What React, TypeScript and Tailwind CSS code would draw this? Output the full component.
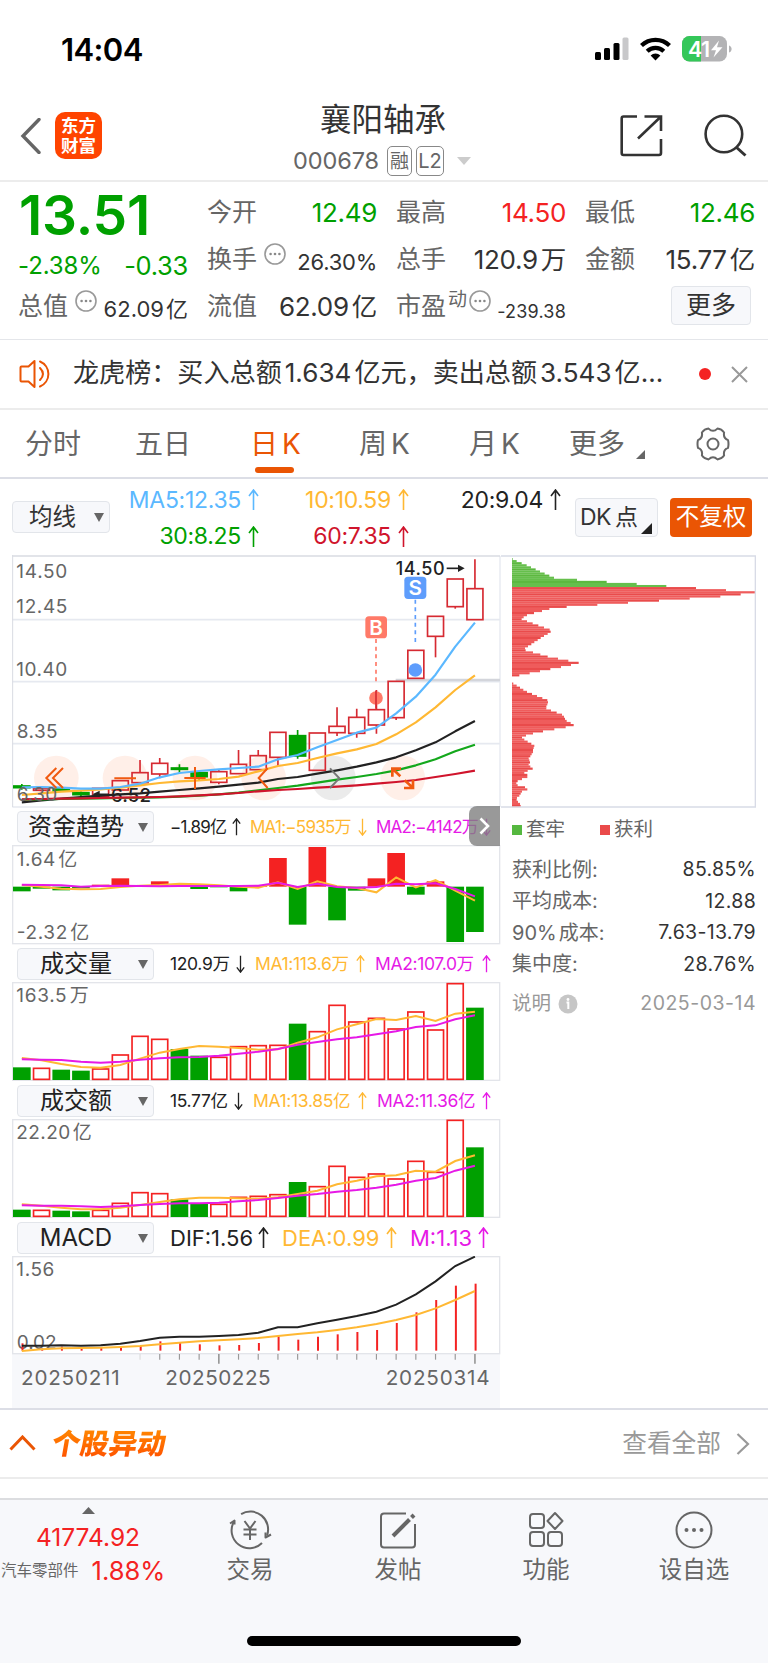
import React from "react";

const PITCH = 59.1;
const cx = (i: number) => 65.5 + PITCH * i;
const line = (ys: number[]) => ys.map((y, i) => `${cx(i)},${y}`).join(" ");

const GREEN = "#00a000";
const RED = "#f42222";
const ORANGE = "#ffb833";
const PINK = "#e619e6";
const CANDLE = "#d62a32";
const UI = '"Inter","Noto Sans CJK SC",sans-serif';

type Candle = { up: boolean; top: number; bottom: number; high: number; low: number };
const c = (up: boolean, top: number, bottom: number, high = top, low = bottom): Candle => ({ up, top, bottom, high, low });

const candles: Candle[] = [
  c(false, 708, 713, 702, 719), c(true, 715, 721, 715, 724), c(false, 714, 723), c(false, 728, 734, 724, 742),
  c(true, 715, 740), c(true, 692, 720), c(true, 668, 698, 630, 698), c(true, 640, 672, 624, 685),
  c(false, 654, 658, 643, 668), c(false, 668, 680, 665, 690), c(true, 665, 697, 660, 703), c(true, 643, 671, 600, 671),
  c(true, 617, 659, 600, 659), c(true, 547, 622, 547, 648), c(false, 557, 618, 540, 626), c(true, 549, 661),
  c(true, 529, 548, 472, 558), c(true, 502, 550, 476, 563), c(true, 479, 525, 420, 551), c(true, 394, 503, 394, 510),
  c(true, 301, 385), c(true, 199, 259, 199, 322), c(true, 87, 170, 87, 176), c(true, 116, 209, 28, 209),
];

const ma5 = [712, 711, 713, 716, 716, 711, 701, 682, 669, 663, 658, 654, 650, 628, 615, 592, 570, 548, 533, 490, 440, 374, 290, 218];
const ma10 = [735, 730, 725, 722, 718, 713, 706, 699, 694, 691, 687, 680, 664, 648, 639, 624, 610, 598, 582, 553, 517, 472, 420, 376];
const ma20 = [757, 751, 746, 741, 737, 733, 730, 725, 720, 715, 710, 704, 698, 687, 681, 671, 661, 650, 637, 622, 601, 577, 544, 513];
const ma30 = [749, 748, 747, 746, 745, 744, 743, 742, 740, 737, 733, 728, 721, 714, 707, 698, 689, 681, 672, 661, 646, 628, 604, 584];
const ma60 = [748, 747, 746, 745, 744, 743, 742, 741, 739, 736, 733, 729, 724, 720, 717, 713, 710, 706, 701, 696, 690, 681, 672, 662];

const chips = [
  38, 50, 65, 80, 93, 107, 120, 134, 148, 162, 231, 320, 410, 499, 588, 678, 765, 722, 661, 569, 477, 384, 292, 200, 148, 126, 102, 81, 71, 65,
  81, 98, 115, 132, 149, 152, 143, 132, 122, 113, 103, 94, 84, 75, 77, 99, 121, 143, 174, 205, 236, 213, 183, 151, 120, 89, 58, 36, 36, 36, 40,
  50, 60, 70, 81, 96, 111, 127, 142, 144, 142, 139, 139, 153, 170, 186, 192, 195, 200, 212, 221, 197, 163, 129, 99, 78, 66, 73, 83, 94, 103,
  101, 99, 99, 95, 91, 86, 88, 90, 86, 91, 98, 83, 73, 82, 82, 66, 53, 49, 53, 75, 82, 66, 62, 58, 51, 50, 54, 60, 62,
];

const flow = [259, 251, 256, 250, 239, 220, 243, 229, 242, 252, 247, 259, 243, 159, 359, 126, 346, 257, 220, 144, 269, 229, 411, 381];
const flowMa1 = [240, 245, 251, 253, 252, 246, 242, 240, 236, 238, 241, 245, 248, 232, 252, 229, 244, 249, 262, 217, 247, 225, 257, 287];
const flowMa2 = [239, 240, 241, 245, 243, 242, 243, 244, 243, 243, 243, 243, 242, 233, 246, 236, 246, 248, 246, 236, 238, 235, 252, 274];

const falling = new Set([0, 2, 3, 8, 9, 14, 23]);
const vol = [367, 370, 374, 377, 372, 330, 274, 283, 312, 332, 337, 305, 302, 301, 236, 260, 181, 231, 220, 252, 201, 255, 116, 188];
const volMa1 = [339, 346, 357, 366, 368, 360, 341, 323, 312, 303, 305, 309, 314, 313, 293, 277, 253, 238, 222, 225, 213, 228, 206, 200];
const volMa2 = [343, 344, 345, 350, 353, 350, 344, 340, 337, 336, 332, 326, 320, 312, 299, 291, 283, 277, 268, 259, 246, 241, 223, 211];

const amt = [374, 376, 377, 379, 376, 355, 323, 326, 343, 356, 358, 337, 334, 329, 291, 305, 244, 277, 267, 282, 229, 262, 106, 187];
const amtMa1 = [358, 362, 368, 373, 373, 368, 360, 351, 343, 338, 338, 340, 341, 337, 327, 317, 298, 287, 274, 271, 257, 260, 228, 211];
const amtMa2 = [361, 362, 362, 364, 366, 364, 360, 357, 355, 355, 353, 349, 345, 339, 332, 327, 320, 315, 308, 299, 287, 279, 257, 242];

const macd = [370, 385, 380, 384, 384, 382, 378, 364, 366, 373, 376, 375, 369, 349, 359, 350, 343, 336, 330, 309, 277, 240, 197, 191];
const dif = [377, 377, 376, 377, 376, 371, 363, 353, 350, 350, 348, 345, 338, 322, 322, 310, 299, 288, 275, 254, 223, 184, 138, 110];
const dea = [393, 388, 385, 384, 383, 381, 378, 373, 368, 364, 361, 358, 354, 348, 342, 337, 330, 322, 312, 300, 285, 265, 240, 213];

function Label({ x, y, w, size = 57, fill = "#666", children }: { x: number; y: number; w: number; size?: number; fill?: string; children: string }) {
  return (
    <text x={x} y={y} textLength={w} lengthAdjust="spacing" fontSize={size} fill={fill} fontFamily={UI}>
      {children}
    </text>
  );
}

function Dots() {
  return (
    <svg className="h-[22px] w-[22px] shrink-0" viewBox="0 0 22 22" fill="none">
      <circle cx="11" cy="11" r="10" stroke="#999" strokeWidth="1.6" />
      <circle cx="6.6" cy="11" r="1.3" fill="#888" />
      <circle cx="11" cy="11" r="1.3" fill="#888" />
      <circle cx="15.4" cy="11" r="1.3" fill="#888" />
    </svg>
  );
}

function Arrow({ down = false, h = 22 }: { down?: boolean; h?: number }) {
  return (
    <svg className="shrink-0" width={h / 2} height={h} viewBox="0 0 11 22" fill="none" stroke="currentColor" strokeWidth="1.6">
      <path d={down ? "M5.5 1V21M1 15L5.5 21L10 15" : "M5.5 21V1M1 7L5.5 1L10 7"} />
    </svg>
  );
}

function Caret() {
  return (
    <svg className="h-[9px] w-[10px] shrink-0" viewBox="0 0 10 9" fill="#666">
      <path d="M0 0H10L5 9Z" />
    </svg>
  );
}

function StatusBar() {
  return (
    <div className="flex h-[98px] items-center pl-[61px] pr-9">
      <span className="text-[31px] font-semibold leading-none tracking-[-0.6px] text-black">14:04</span>
      <svg className="ml-auto h-[26px] w-[138px]" viewBox="594 36 138 26">
        <rect x="595" y="52" width="6" height="8" rx="1.5" fill="#000" />
        <rect x="604" y="48" width="6" height="12" rx="1.5" fill="#000" />
        <rect x="613.5" y="43" width="6" height="17" rx="1.5" fill="#000" />
        <rect x="622.5" y="37.5" width="6" height="22.5" rx="1.5" fill="#c8c8ca" />
        <g fill="none" stroke="#000" strokeWidth="4.2">
          <path d="M641.5 45.5A20 20 0 0 1 669.5 45.5" />
          <path d="M647.2 51.3A12 12 0 0 1 663.8 51.3" />
        </g>
        <path d="M655.5 60.5L650.6 55.4A7 7 0 0 1 660.4 55.4Z" fill="#000" />
        <clipPath id="battery"><rect x="682" y="36" width="45" height="25.5" rx="7.5" /></clipPath>
        <g clipPath="url(#battery)">
          <rect x="682" y="36" width="45" height="26" fill="#b3b3b5" />
          <rect x="682" y="36" width="19" height="26" fill="#34c759" />
        </g>
        <path d="M729 45.5C732.5 46.5 732.5 51.5 729 52.5Z" fill="#b3b3b5" />
        <text x="688" y="56.5" fontSize="21.5" fontWeight="600" textLength="22" fill="#fff" fontFamily={UI}>41</text>
        <path d="M719 40.5L711 50.3H716L713.5 57.5L722.5 47.2H717Z" fill="#fff" />
      </svg>
    </div>
  );
}

function Header() {
  return (
    <header className="flex h-[84px] items-start border-b-2 border-[#ececec] pl-[20px]">
      <svg className="mt-[20px] h-[36px] w-[21px]" viewBox="0 0 21 36" fill="none" stroke="#666" strokeWidth="3.4">
        <path d="M19 1.5L3 18L19 34.5" strokeLinecap="round" />
      </svg>
      <div className="ml-[14px] mt-[14px] flex h-[47px] w-[47px] flex-col items-center justify-center rounded-[10px] bg-[#ff4400] text-[17.5px] font-bold leading-[19.5px] text-white">
        <span>东方</span>
        <span>财富</span>
      </div>
      <div className="ml-[171px] mt-[4px] flex w-[220px] flex-col items-center">
        <h1 className="whitespace-nowrap text-[31.5px] leading-[36px] text-[#333]">襄阳轴承</h1>
        <div className="mt-[8px] flex h-[30px] w-[180px] items-center text-[#666]">
          <span className="mr-[7px] w-[87px] shrink-0 whitespace-nowrap text-[23.5px] leading-none tracking-[-0.1px]">000678</span>
          <span className="mr-[4px] flex h-[30px] w-[25px] shrink-0 items-center justify-center rounded-[5px] border-[1.5px] border-[#888] text-[19px] leading-none">融</span>
          <span className="flex h-[30px] w-[28px] shrink-0 items-center justify-center rounded-[5px] border-[1.5px] border-[#888] text-[20px] leading-none">L2</span>
          <svg className="ml-[13px] h-[8px] w-[14px] shrink-0" viewBox="0 0 14 8" fill="#ccc"><path d="M0 0H14L7 8Z" /></svg>
        </div>
      </div>
      <svg className="ml-[125px] mt-[15px] h-[45px] w-[130px] shrink-0" viewBox="618 113 130 45" fill="none" stroke="#333" strokeWidth="2.6">
        <path d="M637 116.5H623.5Q621.7 116.5 621.7 118.5V153Q621.7 155 623.5 155H659Q661 155 661 153V139" />
        <path d="M644.5 116.5H661V131M661 116.5L638 138.5" />
        <circle cx="723.9" cy="134" r="18.3" />
        <path d="M736 147L745.500 155.5" strokeWidth="3" />
      </svg>
    </header>
  );
}

function Field({ label, value, unit, color = "text-[#333]" }: { label: string; value: string; unit?: string; color?: string }) {
  return (
    <div className="flex h-[47px] items-center whitespace-nowrap">
      <span className="ml-[-1px] text-[25px] leading-none text-[#666]">{label}</span>
      <span className={`${color} ml-auto text-[26px] leading-none tracking-[-0.3px]`}>
        {value}
        {unit && <span className="ml-[3px] text-[25.5px]">{unit}</span>}
      </span>
    </div>
  );
}

function Quote() {
  return (
    <section className="grid h-[158px] grid-cols-4 gap-x-5 border-b-[1.5px] border-[#e4e6ea] pl-[19px] pr-[13px] pt-[7px]">
      <div className="whitespace-nowrap text-[#00a000]">
        <div className="mt-[-1px] h-[54px] text-[55px] font-semibold leading-[54px] tracking-[-0.2px]">13.51</div>
        <div className="flex h-[41px] items-center justify-between pt-[7px] leading-none">
          <span className="ml-[-1px] text-[24px] tracking-[-0.1px]">-2.38%</span>
          <span className="text-[25.5px] tracking-[-0.3px]">-0.33</span>
        </div>
        <div className="flex h-[47px] items-center text-[#333]">
          <span className="ml-[-1px] text-[25px] leading-none text-[#666]">总值</span>
          <span className="mb-[11px] ml-[7px]"><Dots /></span>
          <span className="ml-auto pt-[5px] text-[22px] leading-none">62.09<span className="ml-[2px]">亿</span></span>
        </div>
      </div>
      <div>
        <Field label="今开" value="12.49" color="text-[#00a000]" />
        <div className="flex h-[47px] items-center whitespace-nowrap">
          <span className="ml-[-1px] text-[25px] leading-none text-[#666]">换手</span>
          <span className="mb-[11px] ml-[7px]"><Dots /></span>
          <span className="ml-auto pt-[5px] text-[22px] leading-none tracking-[-0.25px] text-[#333]">26.30%</span>
        </div>
        <Field label="流值" value="62.09" unit="亿" />
      </div>
      <div>
        <Field label="最高" value="14.50" color="text-[#f42222]" />
        <Field label="总手" value="120.9" unit="万" />
        <div className="flex h-[47px] items-center whitespace-nowrap">
          <span className="ml-[-1px] text-[25px] leading-none text-[#666]">市盈</span>
          <span className="mb-[15px] ml-[2px] text-[19px] leading-none text-[#666]">动</span>
          <span className="mb-[11px] ml-[2px]"><Dots /></span>
          <span className="ml-auto pt-[10px] text-[18px] leading-none tracking-[0.2px] text-[#333]">-239.38</span>
        </div>
      </div>
      <div>
        <Field label="最低" value="12.46" color="text-[#00a000]" />
        <Field label="金额" value="15.77" unit="亿" />
        <div className="flex h-[47px] items-center justify-end pb-[2px] pr-[4px]">
          <button className="h-[39px] w-[80px] rounded-[4px] border-[1.5px] border-[#e2e5ea] bg-[#f7f8fb] text-[25px] leading-none text-[#333]">更多</button>
        </div>
      </div>
    </section>
  );
}

function News() {
  return (
    <section className="flex h-[70px] items-center border-b-2 border-[#ececec] pl-[19px] pr-[20px]">
      <svg className="h-[30px] w-[34px]" viewBox="0 0 34 30" fill="none" stroke="#ea5504" strokeWidth="2">
        <path d="M2.5 7.5H9.5L15.5 2V28L9.5 22.5H2.5Q1.5 22.5 1.5 21.5V8.5Q1.5 7.5 2.5 7.5Z" strokeLinejoin="round" />
        <path d="M21 9Q27 15 21 21M21 2.5A13.5 13.5 0 0 1 21 27.5" strokeLinecap="round" />
      </svg>
      <p className="ml-[20px] w-[592px] whitespace-nowrap pb-[1px] text-[26.1px] leading-none text-[#333]">
        龙虎榜：买入总额<span className="mx-[3px]">1.634</span>亿元，卖出总额<span className="mx-[3px]">3.543</span>亿...
      </p>
      <span className="ml-auto h-[12px] w-[12px] rounded-full bg-[#f42222]" />
      <svg className="ml-[20px] h-[17px] w-[17px]" viewBox="0 0 17 17" stroke="#999" strokeWidth="2"><path d="M1 1L16 16M16 1L1 16" /></svg>
    </section>
  );
}

function Tabs() {
  return (
    <nav className="flex h-[69px] items-center border-b-2 border-[#dcdee6] pl-[25px] text-[28px] leading-none text-[#666]">
      <span className="w-[110px] whitespace-nowrap">分时</span>
      <span className="w-[115px] whitespace-nowrap">五日</span>
      <span className="relative w-[109px] whitespace-nowrap text-[#ea5504]">
        日<span className="ml-[4px]">K</span>
        <span className="absolute left-[5px] top-[37px] h-[6px] w-[39px] rounded-[3px] bg-[#ea5504]" />
      </span>
      <span className="w-[110px] whitespace-nowrap">周<span className="ml-[4px]">K</span></span>
      <span className="w-[100px] whitespace-nowrap">月<span className="ml-[4px]">K</span></span>
      <span className="w-[67px] whitespace-nowrap">更多</span>
      <svg className="mt-[22px] h-[9px] w-[9px]" viewBox="0 0 9 9" fill="#666"><path d="M9 0V9H0Z" /></svg>
      <svg className="ml-[51px] h-[34px] w-[34px]" viewBox="0 0 34 34" fill="none" stroke="#666" strokeWidth="2">
        <path
          strokeLinejoin="round"
          d="M32 13.1Q33 17 32 20.9Q27 22.8 28.1 28.5Q25.6 31.9 21.4 32.4Q17 28 12.6 32.4Q8.4 31.9 5.9 28.5Q7 22.8 2 20.9Q1 17 2 13.1Q7 11.2 5.9 5.5Q8.4 2.1 12.6 1.6Q17 6 21.4 1.6Q25.6 2.1 28.1 5.5Q27 11.2 32 13.1Z"
        />
        <circle cx="17" cy="17" r="5.5" />
      </svg>
    </nav>
  );
}

function Ma({ w, text, color }: { w: string; text: string; color: string }) {
  return (
    <span className={`flex items-center justify-end gap-[7px] whitespace-nowrap text-[23px] leading-none tracking-[-0.3px] ${w} ${color}`}>
      {text}
      <Arrow />
    </span>
  );
}

function Averages() {
  return (
    <section className="flex h-[76px] items-center pl-[12px]">
      <button className="flex h-[32px] w-[98px] items-center justify-between rounded-[4px] border-[1.5px] border-[#e2e5ea] bg-[#f7f8fb] pl-[16px] pr-[5px] text-[23.5px] leading-none text-[#333]">
        均线<Caret />
      </button>
      <div className="grid h-[76px] grid-cols-[149px_150px_152px] grid-rows-2 pt-[3px]">
        <Ma w="w-[149px]" text="MA5:12.35" color="text-[#5bb8ff]" />
        <Ma w="w-[150px]" text="10:10.59" color="text-[#ffb833]" />
        <Ma w="w-[152px]" text="20:9.04" color="text-[#222]" />
        <Ma w="w-[149px]" text="30:8.25" color="text-[#00a000]" />
        <Ma w="w-[150px]" text="60:7.35" color="text-[#d0142c]" />
      </div>
      <button className="ml-[14px] flex h-[39px] w-[83px] items-center rounded-[4px] border-[1.5px] border-[#e2e5ea] bg-[#f7f8fb] pl-[4px] text-[23px] leading-none text-[#333]">
        <span className="w-[61px] whitespace-nowrap text-left tracking-[-0.5px]">DK<span className="ml-[4px]">点</span></span>
        <svg className="mt-[22px] h-[11px] w-[11px] shrink-0" viewBox="0 0 11 11" fill="#222"><path d="M11 0V11H0Z" /></svg>
      </button>
      <button className="ml-[12px] h-[39px] w-[82px] rounded-[4px] bg-[#ea5504] text-[23.5px] leading-none text-white">不复权</button>
    </section>
  );
}

function CandleChart() {
  return (
    <svg className="block h-[253px] w-[489px]" viewBox="36 15 1467 759">
      <g stroke="#e6e9f0" strokeWidth="5">
        <path d="M37 209H1500M37 395H1500M37 581H1500" />
        <path d="M37 771H1500M1500 18V771" strokeWidth="4" />
        <path d="M38 15V771" strokeWidth="3" stroke="#d8dbe2" />
        <path d="M37 18H1500" stroke="#d8dbe2" />
      </g>
      <path d="M1187 390H1500" stroke="#d3d5db" strokeWidth="8" />
      <Label x={49} y={84} w={153}>14.50</Label>
      <Label x={49} y={190} w={153}>12.45</Label>
      <Label x={49} y={377} w={153}>10.40</Label>
      <Label x={50} y={564} w={123}>8.35</Label>
      {[169, 375, 585, 791, 1208].map((x) => (
        <circle key={x} cx={x} cy={684} r={67} fill="#ff6420" fillOpacity={0.1} />
      ))}
      <circle cx={1000} cy={684} r={67} fill="#888" fillOpacity={0.17} />
      {candles.map((k, i) => (
        <g key={i} stroke={k.up ? CANDLE : GREEN} strokeWidth="5">
          <path d={`M${cx(i)} ${k.high}V${k.top}M${cx(i)} ${k.bottom}V${k.low}`} />
          <rect x={cx(i) - 24} y={k.top} width="48" height={k.bottom - k.top} fill={k.up ? "none" : GREEN} />
        </g>
      ))}
      <g stroke="#222" strokeWidth="5" fill="none">
        <path d="M327 733H285" />
        <path d="M1340 55H1384" />
        <path d="M299 722L277 733L299 744Z" fill="#222" stroke="none" />
        <path d="M1374 44L1394 55L1374 66Z" fill="#222" stroke="none" />
      </g>
      <text x={333} y={756} textLength={120} fontSize={56} fill="#222" fontFamily={UI} fontWeight="500">6.52</text>
      <text x={1187} y={76} textLength={147} fontSize={54} fill="#222" fontFamily={UI} fontWeight="500">14.50</text>
      <circle cx={1128} cy={444} r={20.5} fill="#ff7a68" />
      <path d="M1128 422V476" stroke={CANDLE} strokeWidth="5" />
      <circle cx={1246} cy={360} r={20.5} fill="#5e9dfc" />
      <path d="M1128 267V395" stroke="#ff7a68" strokeWidth="5" strokeDasharray="12 11" />
      <path d="M1246 149V277" stroke="#5e9dfc" strokeWidth="5" strokeDasharray="12 11" />
      <rect x="1096" y="199" width="65" height="66" rx="11" fill="#ff7a68" />
      <rect x="1213" y="80" width="66" height="67" rx="11" fill="#5e9dfc" />
      <text x="1128.5" y="255" fontSize="62" fontWeight="600" textAnchor="middle" fill="#fff" fontFamily={UI}>B</text>
      <text x="1246" y="136" fontSize="62" fontWeight="600" textAnchor="middle" fill="#fff" fontFamily={UI}>S</text>
      <g fill="none" strokeWidth="6.5" strokeLinejoin="round">
        <polyline points={line(ma20)} stroke="#222" />
        <polyline points={line(ma30)} stroke="#14a81c" />
        <polyline points={line(ma60)} stroke="#d0142c" />
        <polyline points={line(ma10)} stroke={ORANGE} />
        <polyline points={line(ma5)} stroke="#5bb8ff" />
      </g>
      <Label x={50} y={752} w={122}>6.30</Label>
      <g fill="none" stroke="#f05a10" strokeWidth="6">
        <path d="M169 654L139 684L169 714M189 654L159 684L189 714" />
        <path d="M343 685H408M553 684H617M585 651V717" />
        <path d="M803 654L776 684L803 714" />
        <path d="M1177 680V656H1203M1179 658L1201 679M1239 690V714H1212M1237 712L1214 691" strokeWidth="8" />
        <path d="M990 655L1018 685L990 714" stroke="#777" />
      </g>
    </svg>
  );
}

function ChipChart() {
  const step = 6.225;
  return (
    <svg className="block h-[253px] w-[255px]" viewBox="3 15 765 759">
      {chips.map((x, i) => (
        <rect
          key={i}
          x={36}
          y={24 + i * step}
          width={Math.max(0, x - 36)}
          height={step + 0.4}
          fill={i < 14 ? (i % 3 === 2 ? "#5cb83f" : "#66bf4c") : i % 3 === 2 ? "#e94b4b" : "#ef5c5c"}
        />
      ))}
      <path d="M3 18H766V771H3" fill="none" stroke="#d8dbe6" strokeWidth="4" />
    </svg>
  );
}

type Stat = { text: string; color: string; down?: boolean; pos: string };

function PanelHead({ title, stats, size = "text-[17.5px] tracking-[-0.35px]", arrow = 18 }: { title: string; stats: Stat[]; size?: string; arrow?: number }) {
  return (
    <div className="flex h-[37px] items-center pl-[5px] pt-[1px]">
      <button className="mr-[16px] flex h-[32px] w-[137px] shrink-0 items-center rounded-[4px] border-[1.5px] border-[#e2e5ea] bg-[#f7f8fb] pr-[5px] text-[24px] leading-none text-[#222]">
        <span className="w-[111px] shrink-0 whitespace-nowrap pl-[5px] text-center">{title}</span>
        <span className="ml-auto"><Caret /></span>
      </button>
      {stats.map((s) => (
        <span key={s.text} className={`flex shrink-0 items-center justify-between whitespace-nowrap leading-none ${size} ${s.color} ${s.pos}`}>
          {s.text}
          <Arrow down={s.down} h={arrow} />
        </span>
      ))}
    </div>
  );
}

function Frame({ top, bottom }: { top: number; bottom: number }) {
  return <rect x="38" y={top} width="1461" height={bottom - top} fill="none" stroke="#e3e5ea" strokeWidth="4" />;
}

function FlowChart() {
  return (
    <svg className="block h-[100px] w-[489px]" viewBox="36 120 1467 300">
      <Frame top={122} bottom={416} />
      <Label x={50} y={182} w={182}>{"1.64\u200a亿"}</Label>
      <Label x={50} y={403} w={218}>{"-2.32\u200a亿"}</Label>
      {flow.map((y, i) => (
        <rect key={i} x={cx(i) - 26.5} width="53" y={Math.min(y, 245)} height={Math.abs(y - 245)} fill={y < 245 ? RED : GREEN} />
      ))}
      <g fill="none" strokeWidth="6">
        <polyline points={line(flowMa1)} stroke={ORANGE} />
        <polyline points={line(flowMa2)} stroke={PINK} />
      </g>
    </svg>
  );
}

function BarChart({ y0, bottom, label, labelWidth, tops, ma1, ma2 }: { y0: number; bottom: number; label: string; labelWidth: number; tops: number[]; ma1: number[]; ma2: number[] }) {
  return (
    <svg className="block h-[100px] w-[489px]" viewBox={`36 ${y0} 1467 300`}>
      <Frame top={y0 + 2} bottom={bottom + 1} />
      <Label x={49} y={y0 + 61} w={labelWidth}>{label}</Label>
      {tops.map((y, i) =>
        falling.has(i) ? (
          <rect key={i} x={cx(i) - 26.5} width="53" y={y} height={bottom - y} fill={GREEN} />
        ) : (
          <rect key={i} x={cx(i) - 24} width="48" y={y} height={bottom - 2 - y} fill="none" stroke={RED} strokeWidth="5" />
        )
      )}
      <g fill="none" strokeWidth="6">
        <polyline points={line(ma1)} stroke={ORANGE} />
        <polyline points={line(ma2)} stroke={PINK} />
      </g>
    </svg>
  );
}

function MacdChart() {
  return (
    <svg className="block h-[152px] w-[489px]" viewBox="36 108 1467 456">
      <rect x="36" y="402" width="1464" height="162" fill="#f7f8fb" />
      <Frame top={110} bottom={401} />
      <Label x={49} y={167} w={114}>1.56</Label>
      <Label x={50} y={387} w={120}>0.02</Label>
      {macd.map((y, i) => (
        <path key={i} d={`M${cx(i) + 2} ${y}V392`} stroke={RED} strokeWidth="6" />
      ))}
      <g fill="none" strokeWidth="6">
        <polyline points={line(dea)} stroke={ORANGE} />
        <polyline points={line(dif)} stroke="#222" />
      </g>
      {Array.from({ length: 18 }, (_, k) => k + 6).map((i) => {
        const major = i === 10 || i === 23;
        return <path key={i} d={`M${cx(i)} 402V${major ? 431 : 419}`} stroke={i === 6 ? "#ddd" : "#999"} strokeWidth={major ? 5 : 3.5} />;
      })}
      <Label x={63} y={494} w={296} size={62}>20250211</Label>
      <Label x={496} y={494} w={316} size={62}>20250225</Label>
      <Label x={1157} y={494} w={312} size={62}>20250314</Label>
    </svg>
  );
}

function ChipRow({ label, value }: { label: React.ReactNode; value: string }) {
  return (
    <div className="flex h-[31.5px] items-center justify-between whitespace-nowrap leading-none">
      <span className="text-[20px] text-[#666]">{label}</span>
      <span className="text-[19.5px] tracking-[0.3px] text-[#333]">{value}</span>
    </div>
  );
}

function Charts() {
  return (
    <section className="flex h-[855px] items-start border-b-2 border-[#dcdee6] pl-[12px]">
      <div className="relative w-[489px]">
        <CandleChart />
        <PanelHead
          title="资金趋势"
          size="text-[17px] tracking-[-0.75px]"
          stats={[
            { text: "−1.89亿", color: "text-[#222]", pos: "w-[71px]" },
            { text: "MA1:−5935万", color: "text-[#ffb833]", down: true, pos: "ml-[9px] w-[117px]" },
            { text: "MA2:−4142万", color: "text-[#e619e6]", down: true, pos: "ml-[9px] w-[115px]" },
          ]}
        />
        <div className="absolute right-[1px] top-[251px] flex h-[40px] w-[31px] items-center justify-center rounded-l-[8px] bg-[#808080]/80">
          <svg className="h-[18px] w-[11px]" viewBox="0 0 11 18" fill="none" stroke="#fff" strokeWidth="2.6"><path d="M1.5 1.5L9 9L1.5 16.5" /></svg>
        </div>
        <FlowChart />
        <PanelHead
          title="成交量"
          stats={[
            { text: "120.9万", color: "text-[#222]", down: true, pos: "w-[75px]" },
            { text: "MA1:113.6万", color: "text-[#ffb833]", pos: "ml-[10px] w-[110px]" },
            { text: "MA2:107.0万", color: "text-[#e619e6]", pos: "ml-[10px] w-[116px]" },
          ]}
        />
        <BarChart y0={111} bottom={405} label={"163.5\u200a万"} labelWidth={217} tops={vol} ma1={volMa1} ma2={volMa2} />
        <PanelHead
          title="成交额"
          stats={[
            { text: "15.77亿", color: "text-[#222]", down: true, pos: "w-[73px]" },
            { text: "MA1:13.85亿", color: "text-[#ffb833]", pos: "ml-[10px] w-[114px]" },
            { text: "MA2:11.36亿", color: "text-[#e619e6]", pos: "ml-[10px] w-[114px]" },
          ]}
        />
        <BarChart y0={102} bottom={396} label={"22.20\u200a亿"} labelWidth={226} tops={amt} ma1={amtMa1} ma2={amtMa2} />
        <PanelHead
          title="MACD"
          size="text-[22px]"
          arrow={22}
          stats={[
            { text: "DIF:1.56", color: "text-[#222]", pos: "w-[99px]" },
            { text: "DEA:0.99", color: "text-[#ffb833]", pos: "ml-[13px] w-[115px]" },
            { text: "M:1.13", color: "text-[#e619e6]", pos: "ml-[13px] w-[79px]" },
          ]}
        />
        <MacdChart />
      </div>
      <div className="w-[255px]">
        <ChipChart />
        <div className="pl-[11px]">
          <div className="mt-[8px] flex h-[27px] items-center text-[19.5px] leading-none text-[#666]">
            <span className="mr-[4px] h-[10px] w-[10px] bg-[#55b83f]" />
            <span className="w-[74px]">套牢</span>
            <span className="mr-[4px] h-[10px] w-[10px] bg-[#ea4a4a]" />
            <span>获利</span>
          </div>
          <div className="mt-[11px]">
            <ChipRow label="获利比例:" value="85.85%" />
            <ChipRow label="平均成本:" value="12.88" />
            <ChipRow label={<>90%<span className="ml-[2px]">成本:</span></>} value="7.63-13.79" />
            <ChipRow label="集中度:" value="28.76%" />
          </div>
          <div className="mt-[9px] flex h-[30px] items-center text-[19.5px] leading-none text-[#999]">
            <span>说明</span>
            <svg className="ml-[7px] h-[20px] w-[20px]" viewBox="0 0 20 20">
              <circle cx="10" cy="10" r="9.5" fill="#c6c6c6" />
              <circle cx="10" cy="5.5" r="1.4" fill="#fff" />
              <path d="M8.5 8.5H10.3V15" stroke="#fff" strokeWidth="2" fill="none" />
            </svg>
            <span className="ml-auto tracking-[0.5px]">2025-03-14</span>
          </div>
        </div>
      </div>
    </section>
  );
}

function Movement() {
  return (
    <section className="flex h-[69px] items-center border-b-2 border-[#ececec] pl-[9px] pr-[18px]">
      <svg className="mb-[2px] h-[16px] w-[27px]" viewBox="0 0 27 16" fill="none" stroke="#ea5504" strokeWidth="3"><path d="M1.5 14.5L13.5 2L25.5 14.5" /></svg>
      <h2 className="ml-[16px] -skew-x-[10deg] whitespace-nowrap bg-gradient-to-b from-[#ff8a00] to-[#ff4a00] bg-clip-text text-[28.5px] font-black leading-[34px] text-transparent">个股异动</h2>
      <span className="ml-auto text-[24.7px] leading-none text-[#999]">查看全部</span>
      <svg className="ml-[15px] h-[22px] w-[14px]" viewBox="0 0 14 22" fill="none" stroke="#999" strokeWidth="2.2"><path d="M1.5 1L12 11L1.5 21" /></svg>
    </section>
  );
}

function NavItem({ label, children }: { label: string; children: React.ReactNode }) {
  return (
    <div className="flex w-[148px] flex-col items-center pt-[10px]">
      <svg className="h-[40px] w-[44px]" viewBox="0 0 44 40" fill="none" stroke="#666" strokeWidth="2" strokeLinejoin="round">
        {children}
      </svg>
      <span className="mt-[8px] whitespace-nowrap text-[23.5px] leading-[24px] text-[#666]">{label}</span>
    </div>
  );
}

function BottomBar() {
  return (
    <footer className="flex h-[165px] flex-col border-t-2 border-[#dcdde0] bg-[#f7f8fb]">
      <div className="flex h-[90px]">
        <div className="w-[176px] whitespace-nowrap">
          <svg className="ml-[82px] mt-[7px] h-[7px] w-[13px]" viewBox="0 0 13 7" fill="#666"><path d="M6.5 0L13 7H0Z" /></svg>
          <div className="mt-[11px] w-[176px] text-center text-[24.5px] leading-[24px] text-[#f42222]">41774.92</div>
          <div className="mt-[10px] flex items-center pl-[1px] leading-[24px]">
            <span className="text-[15.5px] text-[#666]">汽车零部件</span>
            <span className="ml-[13px] text-[25.5px] text-[#f42222]">1.88%</span>
          </div>
        </div>
        <NavItem label="交易">
          <path d="M13.1 4.1A17.8 17.8 0 0 1 39 25.500" />
          <path d="M34 33A17.8 17.8 0 0 1 6 11.500" />
          <path d="M2 13.500L6.500 10.500V14.500M37.500 22.500V27.500L43 24.500" />
          <path d="M16.500 11L22 18.500L27.500 11M15.500 19.500H28.500M15.500 24.500H28.500M22 18.500V30" />
        </NavItem>
        <NavItem label="发帖">
          <path d="M30 3.5H8Q5 3.5 5 6.5V34.5Q5 37.5 8 37.5H36Q39 37.5 39 34.5V14" />
          <path d="M17 26L33.5 9.5" strokeWidth="4" />
          <path d="M35.5 7.5L38 5" strokeWidth="4" />
        </NavItem>
        <NavItem label="功能">
          <rect x="6" y="4" width="14" height="14" rx="3" />
          <rect x="6" y="22" width="14" height="14" rx="3" />
          <rect x="24" y="22" width="14" height="14" rx="3" />
          <path d="M31 3L38.5 11L31 19L23.5 11Z" />
        </NavItem>
        <NavItem label="设自选">
          <circle cx="22" cy="20" r="17.5" />
          <g fill="#666" stroke="none"><circle cx="14.5" cy="20" r="2" /><circle cx="22" cy="20" r="2" /><circle cx="29.5" cy="20" r="2" /></g>
        </NavItem>
      </div>
      <div className="mx-auto mt-[46px] h-[10px] w-[274px] rounded-full bg-black" />
    </footer>
  );
}

export default function App() {
  return (
    <div className='flex h-[1663px] w-[768px] flex-col overflow-hidden bg-white font-["Inter","Noto_Sans_CJK_SC",sans-serif]'>
      <StatusBar />
      <Header />
      <Quote />
      <News />
      <Tabs />
      <Averages />
      <Charts />
      <Movement />
      <div className="flex-1" />
      <BottomBar />
    </div>
  );
}
